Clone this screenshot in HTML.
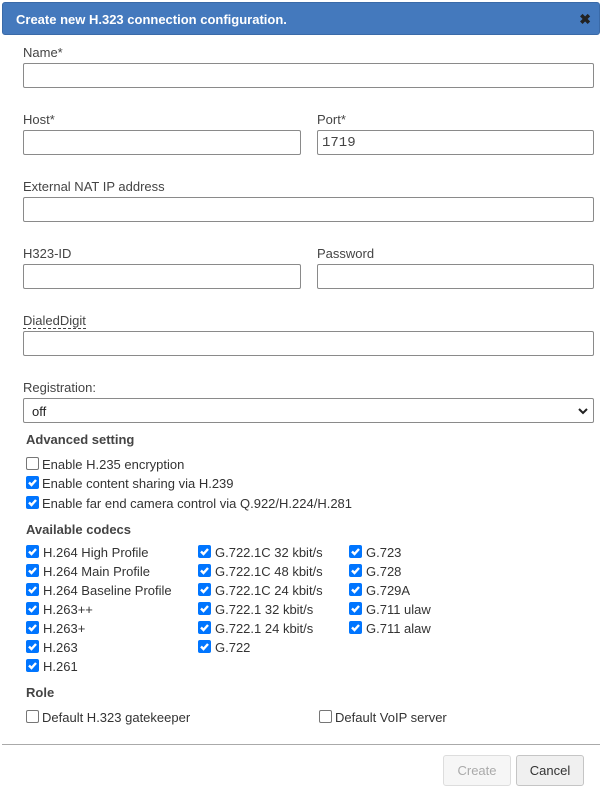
<!DOCTYPE html>
<html><head><meta charset="utf-8"><style>
*{box-sizing:border-box;margin:0;padding:0}
body{width:602px;height:793px;background:#fff;font-family:"Liberation Sans",sans-serif;color:#333;font-size:13px;position:relative;overflow:hidden}
.a{position:absolute;white-space:nowrap}
.hdr{left:2px;top:2px;width:598px;height:33px;background:#4479bd;border:1px solid #3a6aa8;border-radius:3px}
.hdr span{position:absolute;left:13px;top:9px;color:#fff;font-weight:bold;font-size:13px}
.hdr b{position:absolute;right:8px;top:8px;color:#222;font-size:14px}
.lbl{font-size:13px;color:#444}
.in{border:1px solid #8a8a8a;border-radius:2px;height:25px;background:#fff}
.cb{position:absolute;width:13px;height:13px;border-radius:2px;background:#0075ff}
.cb svg{position:absolute;left:1px;top:1px}
.ub{position:absolute;width:13px;height:13px;border-radius:2px;border:1px solid #767676;background:#fff}
.bold{font-weight:bold;font-size:13px;color:#444}
</style></head><body>
<div class="a hdr"><span>Create new H.323 connection configuration.</span><b>✖</b></div>

<div class="a lbl" style="left:23px;top:45px">Name*</div>
<div class="a in" style="left:23px;top:63px;width:571px"></div>

<div class="a lbl" style="left:23px;top:112px">Host*</div>
<div class="a in" style="left:23px;top:130px;width:278px"></div>
<div class="a lbl" style="left:317px;top:112px">Port*</div>
<div class="a in" style="left:317px;top:130px;width:277px"><span style="position:absolute;left:4px;top:4px;font-family:'Liberation Mono',monospace;font-size:14px;color:#444">1719</span></div>

<div class="a lbl" style="left:23px;top:179px">External NAT IP address</div>
<div class="a in" style="left:23px;top:197px;width:571px"></div>

<div class="a lbl" style="left:23px;top:246px">H323-ID</div>
<div class="a in" style="left:23px;top:264px;width:278px"></div>
<div class="a lbl" style="left:317px;top:246px">Password</div>
<div class="a in" style="left:317px;top:264px;width:277px"></div>

<div class="a lbl" style="left:23px;top:313px;border-bottom:1px dashed #444;line-height:15px">DialedDigit</div>
<div class="a in" style="left:23px;top:331px;width:571px"></div>

<div class="a lbl" style="left:23px;top:380px">Registration:</div>
<div class="a in" style="left:23px;top:398px;width:571px"><span style="position:absolute;left:8px;top:5px;font-size:13px;color:#222">off</span>
<svg style="position:absolute;right:5px;top:9px" width="10" height="7" viewBox="0 0 10 7"><path d="M1 1l4 4 4-4" stroke="#222" stroke-width="2" fill="none"/></svg></div>

<div class="a bold" style="left:26px;top:432px">Advanced setting</div>
<div class="ub" style="left:26px;top:457px"></div><div class="a" style="left:42px;top:457px">Enable H.235 encryption</div>
<div id="c"></div>
<div class="a" style="left:42px;top:476px">Enable content sharing via H.239</div>
<div class="a" style="left:42px;top:496px">Enable far end camera control via Q.922/H.224/H.281</div>

<div class="a bold" style="left:26px;top:522px">Available codecs</div>
<div class="a" style="left:43px;top:545px">H.264 High Profile</div>
<div class="a" style="left:43px;top:564px">H.264 Main Profile</div>
<div class="a" style="left:43px;top:583px">H.264 Baseline Profile</div>
<div class="a" style="left:43px;top:602px">H.263++</div>
<div class="a" style="left:43px;top:621px">H.263+</div>
<div class="a" style="left:43px;top:640px">H.263</div>
<div class="a" style="left:43px;top:659px">H.261</div>
<div class="a" style="left:215px;top:545px">G.722.1C 32 kbit/s</div>
<div class="a" style="left:215px;top:564px">G.722.1C 48 kbit/s</div>
<div class="a" style="left:215px;top:583px">G.722.1C 24 kbit/s</div>
<div class="a" style="left:215px;top:602px">G.722.1 32 kbit/s</div>
<div class="a" style="left:215px;top:621px">G.722.1 24 kbit/s</div>
<div class="a" style="left:215px;top:640px">G.722</div>
<div class="a" style="left:366px;top:545px">G.723</div>
<div class="a" style="left:366px;top:564px">G.728</div>
<div class="a" style="left:366px;top:583px">G.729A</div>
<div class="a" style="left:366px;top:602px">G.711 ulaw</div>
<div class="a" style="left:366px;top:621px">G.711 alaw</div>

<div class="a bold" style="left:26px;top:685px">Role</div>
<div class="ub" style="left:26px;top:710px"></div><div class="a" style="left:42px;top:710px">Default H.323 gatekeeper</div>
<div class="ub" style="left:319px;top:710px"></div><div class="a" style="left:335px;top:710px">Default VoIP server</div>

<div class="a" style="left:2px;top:744px;width:598px;height:1px;background:#aaa"></div>
<div class="a" style="left:443px;top:755px;width:68px;height:31px;border:1px solid #ddd;border-radius:3px;background:#f6f6f6;color:#aaa;text-align:center;line-height:29px">Create</div>
<div class="a" style="left:516px;top:755px;width:68px;height:31px;border:1px solid #c5c5c5;border-radius:3px;background:#f0f0f0;color:#333;text-align:center;line-height:29px">Cancel</div>

<script>
var pos=[[26,476],[26,496]];
for(var i=0;i<7;i++)pos.push([26,545+19*i]);
for(i=0;i<6;i++)pos.push([198,545+19*i]);
for(i=0;i<5;i++)pos.push([349,545+19*i]);
var h='';
pos.forEach(function(p){h+='<div class="cb" style="left:'+p[0]+'px;top:'+(p[1])+'px"><svg width="11" height="11" viewBox="0 0 11 11"><path d="M2 5.5l2.5 2.5 4.5-5" stroke="#fff" stroke-width="2.4" fill="none"/></svg></div>';});
document.getElementById('c').innerHTML=h;
</script>
</body></html>
